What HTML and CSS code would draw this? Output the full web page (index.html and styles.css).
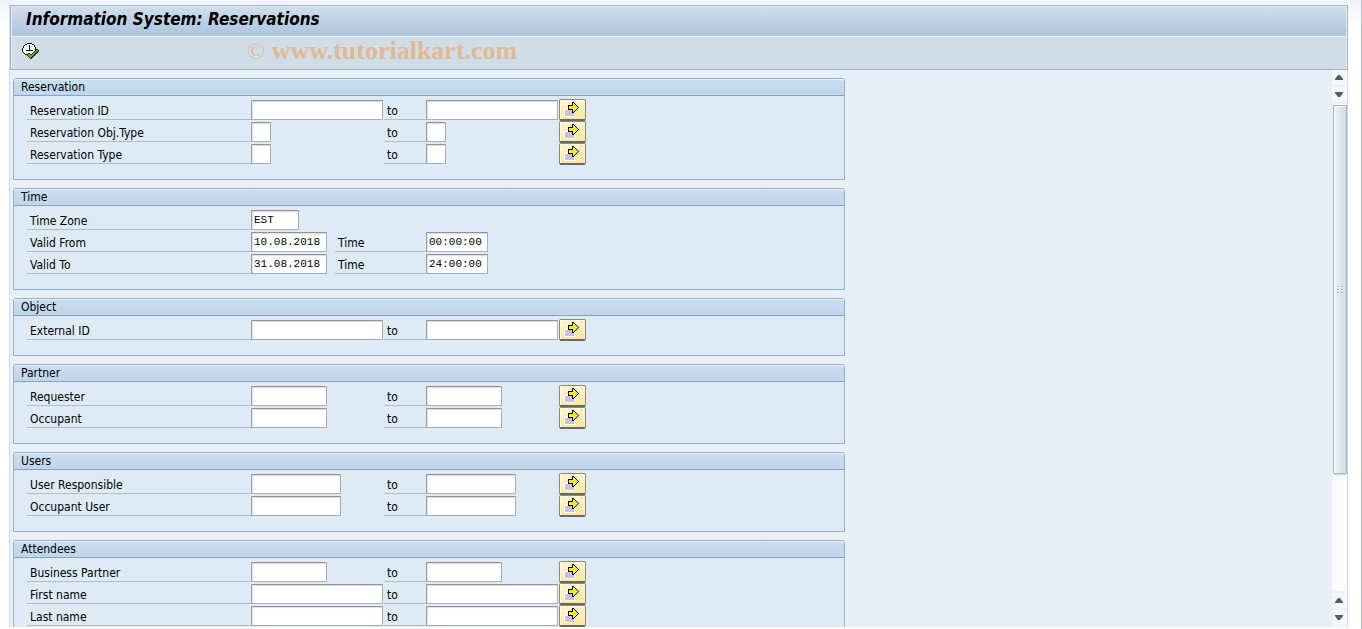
FILE: index.html
```html
<!DOCTYPE html>
<html lang="en">

<head>
    <meta charset="UTF-8">
    <title>Information System: Reservations</title>
    <meta name="viewport" content="width=device-width, initial-scale=1.0">
    <link rel="stylesheet" href="styles.css">
</head>

<body>
    <!-- Shared icons -->
    <svg class="icon-defs" width="0" height="0" aria-hidden="true">
        <symbol id="icon-multi" viewBox="0 0 16 16" shape-rendering="crispEdges">
            <path d="M0 7h11v8H0z" fill="#fff" />
            <path d="M1 8h9v6H1z" fill="#d2bfdc" />
            <path d="M4 3h4V0h2v1h1v1h1v1h1v1h1v1h1v1h-1v1h-1v1h-1v1h-1v1h-1v1H8V8H4z" fill="#000" />
            <path d="M5 4h4V1h1v1h1v1h1v1h1v1h1v1h-1v1h-1v1h-1v1h-1v1H9V7H5z" fill="#ffee00" />
        </symbol>
        <symbol id="icon-up" viewBox="0 0 8 5">
            <path d="M3 0h2l3 4v1H0V4z" fill="#4d5f6c" />
        </symbol>
        <symbol id="icon-down" viewBox="0 0 8 5">
            <path d="M0 0h8v1L5 5H3L0 1z" fill="#4d5f6c" />
        </symbol>
    </svg>

    <div class="window">
        <header class="title-bar">
            <h1>Information System: Reservations</h1>
        </header>

        <!-- Application toolbar -->
        <div class="toolbar">
            <button class="execute-btn" type="button" aria-label="Execute">
                <svg width="17" height="16" viewBox="0 0 17 16" shape-rendering="crispEdges">
                    <path d="M5 0h5v1h2v1h1v2h1v6h-1v1h-1v1h-2v1H5v-1H3v-1H2v-1H1V9H0V5h1V3h1V2h1V1h2z" fill="#000" />
                    <path d="M5 1h5v1h2v2h1v6h-1v1h-2v1H5v-1H3v-1H2V9H1V5h1V3h1V2h2z" fill="#fff" />
                    <path d="M7 2h1v5h3v1H4V7h3z" fill="#000" />
                    <path d="M14 6h2v1h1v2h-1v1h-1v1h-1v1h-1v1h-1v1h-1v1h-1v1H8v-1H7v-1H6v-1H5v-2h1v-1h2v1h2v-1h1V9h1V8h1V7h1z" fill="#1c3a10" />
                    <path d="M14 7h2v1h-1v1h-1v1h-1v1h-1v1h-1v1h-1v1H9v1H8v-1H7v-1H6v-2h2v1h2v-1h1v-1h1V9h1V8h1z" fill="#56b32c" />
                </svg>
            </button>
            <span class="watermark"><span class="copyright">©</span> www.tutorialkart.com</span>
        </div>

        <div class="workspace">
            <form class="selection">
                <fieldset class="group">
                    <legend>Reservation</legend>
                    <div class="row">
                        <label for="res-id">Reservation ID</label>
                        <input class="w-long" id="res-id" type="text">
                        <label for="res-id-to">to</label>
                        <input class="w-long" id="res-id-to" type="text">
                        <button class="multi-btn" type="button" aria-label="Multiple selection"><svg><use href="#icon-multi" /></svg></button>
                    </div>
                    <div class="row">
                        <label for="res-obj">Reservation Obj.Type</label>
                        <input class="w-tiny" id="res-obj" type="text">
                        <label for="res-obj-to">to</label>
                        <input class="w-tiny" id="res-obj-to" type="text">
                        <button class="multi-btn" type="button" aria-label="Multiple selection"><svg><use href="#icon-multi" /></svg></button>
                    </div>
                    <div class="row">
                        <label for="res-type">Reservation Type</label>
                        <input class="w-tiny" id="res-type" type="text">
                        <label for="res-type-to">to</label>
                        <input class="w-tiny" id="res-type-to" type="text">
                        <button class="multi-btn" type="button" aria-label="Multiple selection"><svg><use href="#icon-multi" /></svg></button>
                    </div>
                </fieldset>

                <fieldset class="group">
                    <legend>Time</legend>
                    <div class="row time-row">
                        <label for="zone">Time Zone</label>
                        <input class="w-zone" id="zone" type="text" value="EST">
                    </div>
                    <div class="row time-row">
                        <label for="valid-from">Valid From</label>
                        <input class="w-date" id="valid-from" type="text" value="10.08.2018">
                        <label for="from-time">Time</label>
                        <input class="w-time" id="from-time" type="text" value="00:00:00">
                    </div>
                    <div class="row time-row">
                        <label for="valid-to">Valid To</label>
                        <input class="w-date" id="valid-to" type="text" value="31.08.2018">
                        <label for="to-time">Time</label>
                        <input class="w-time" id="to-time" type="text" value="24:00:00">
                    </div>
                </fieldset>

                <fieldset class="group">
                    <legend>Object</legend>
                    <div class="row">
                        <label for="ext-id">External ID</label>
                        <input class="w-long" id="ext-id" type="text">
                        <label for="ext-id-to">to</label>
                        <input class="w-long" id="ext-id-to" type="text">
                        <button class="multi-btn" type="button" aria-label="Multiple selection"><svg><use href="#icon-multi" /></svg></button>
                    </div>
                </fieldset>

                <fieldset class="group">
                    <legend>Partner</legend>
                    <div class="row">
                        <label for="requester">Requester</label>
                        <input class="w-date" id="requester" type="text">
                        <label for="requester-to">to</label>
                        <input class="w-date" id="requester-to" type="text">
                        <button class="multi-btn" type="button" aria-label="Multiple selection"><svg><use href="#icon-multi" /></svg></button>
                    </div>
                    <div class="row">
                        <label for="occupant">Occupant</label>
                        <input class="w-date" id="occupant" type="text">
                        <label for="occupant-to">to</label>
                        <input class="w-date" id="occupant-to" type="text">
                        <button class="multi-btn" type="button" aria-label="Multiple selection"><svg><use href="#icon-multi" /></svg></button>
                    </div>
                </fieldset>

                <fieldset class="group">
                    <legend>Users</legend>
                    <div class="row">
                        <label for="user-resp">User Responsible</label>
                        <input class="w-user" id="user-resp" type="text">
                        <label for="user-resp-to">to</label>
                        <input class="w-user" id="user-resp-to" type="text">
                        <button class="multi-btn" type="button" aria-label="Multiple selection"><svg><use href="#icon-multi" /></svg></button>
                    </div>
                    <div class="row">
                        <label for="occ-user">Occupant User</label>
                        <input class="w-user" id="occ-user" type="text">
                        <label for="occ-user-to">to</label>
                        <input class="w-user" id="occ-user-to" type="text">
                        <button class="multi-btn" type="button" aria-label="Multiple selection"><svg><use href="#icon-multi" /></svg></button>
                    </div>
                </fieldset>

                <fieldset class="group">
                    <legend>Attendees</legend>
                    <div class="row">
                        <label for="partner">Business Partner</label>
                        <input class="w-date" id="partner" type="text">
                        <label for="partner-to">to</label>
                        <input class="w-date" id="partner-to" type="text">
                        <button class="multi-btn" type="button" aria-label="Multiple selection"><svg><use href="#icon-multi" /></svg></button>
                    </div>
                    <div class="row">
                        <label for="first-name">First name</label>
                        <input class="w-long" id="first-name" type="text">
                        <label for="first-name-to">to</label>
                        <input class="w-long" id="first-name-to" type="text">
                        <button class="multi-btn" type="button" aria-label="Multiple selection"><svg><use href="#icon-multi" /></svg></button>
                    </div>
                    <div class="row">
                        <label for="last-name">Last name</label>
                        <input class="w-long" id="last-name" type="text">
                        <label for="last-name-to">to</label>
                        <input class="w-long" id="last-name-to" type="text">
                        <button class="multi-btn" type="button" aria-label="Multiple selection"><svg><use href="#icon-multi" /></svg></button>
                    </div>
                </fieldset>
            </form>

            <!-- Vertical scroll bar -->
            <div class="scrollbar">
                <button class="scroll-btn" type="button" aria-label="Scroll up"><svg><use href="#icon-up" /></svg></button>
                <button class="scroll-btn" type="button" aria-label="Scroll down"><svg><use href="#icon-down" /></svg></button>
                <div class="track">
                    <div class="thumb">
                        <svg width="6" height="8" viewBox="0 0 6 8" shape-rendering="crispEdges">
                            <path d="M1 1h2v1H1zM5 1h1v1H5zM1 4h2v1H1zM5 4h1v1H5zM1 7h2v1H1zM5 7h1v1H5z" fill="#fff" />
                            <path d="M0 0h2v1H0zM4 0h2v1H4zM0 3h2v1H0zM4 3h2v1H4zM0 6h2v1H0zM4 6h2v1H4z" fill="#9db2c4" />
                        </svg>
                    </div>
                </div>
                <button class="scroll-btn" type="button" aria-label="Scroll up"><svg><use href="#icon-up" /></svg></button>
                <button class="scroll-btn" type="button" aria-label="Scroll down"><svg><use href="#icon-down" /></svg></button>
            </div>
        </div>
    </div>
</body>

</html>
```
FILE: styles.css
```css
* {
    box-sizing: border-box;
}

body {
    display: flex;
    height: 100vh;
    margin: 0;
    padding: 5px 13px 2px 10px;
    border-right: 1px solid #b9c0cc;
    background: linear-gradient(#f0f3f9, #fff 28px);
    font-family: "DejaVu Sans Condensed", Tahoma, sans-serif;
    font-size: 12px;
    color: #000;
    overflow: hidden;
}

.icon-defs {
    position: absolute;
}

.window {
    flex: 1;
    display: flex;
    flex-direction: column;
    min-width: 0;
    background-color: #e8eff7;
    box-shadow: -1px 0 0 #d5dbe8;
}

.title-bar {
    height: 31px;
    padding: 0 15px;
    border: 1px solid #a3b5c8;
    border-bottom: 0;
    background: linear-gradient(#cfdfeb, #adc4dd);
    box-shadow: inset 1px 1px 0 #e2ebf3, inset -1px 0 0 #e2ebf3;
}

.title-bar h1 {
    margin: 0;
    font-size: 17px;
    line-height: 27px;
    font-style: italic;
    font-weight: bold;
}

.toolbar {
    display: flex;
    align-items: center;
    height: 34px;
    padding: 0 10px 4px;
    border: 1px solid #a3b5c8;
    border-top-color: #e6eef6;
    background-color: #cfdde8;
    box-shadow: inset 1px 0 0 #e2ebf3, inset -1px 0 0 #e2ebf3;
}

.execute-btn {
    width: 20px;
    height: 20px;
    padding: 0;
    border: 0;
    background: none;
}

.execute-btn svg {
    display: block;
    margin: 2px 1px;
}

.watermark {
    margin-left: 206px;
    font-family: "Liberation Serif", "Times New Roman", serif;
    font-size: 26px;
    line-height: 28px;
    font-weight: bold;
    color: #e3b98d;
    white-space: nowrap;
}

.copyright {
    font-size: 24px;
    font-weight: normal;
}

.workspace {
    flex: 1;
    display: flex;
    justify-content: space-between;
    min-height: 0;
    border-right: 1px solid #d0d8e6;
    overflow: hidden;
}

.selection {
    flex: 1;
    max-width: 835px;
    padding: 8px 0 0 3px;
}

/* Selection groups */
.group {
    margin: 0 0 8px;
    padding: 0 0 14px;
    border: 1px solid #8fb1d2;
    border-radius: 3px 3px 0 0;
    background-color: #deebf4;
}

.group legend {
    float: left;
    width: 100%;
    height: 17px;
    margin-bottom: 3px;
    padding: 0 7px;
    border-bottom: 1px solid #86a2c4;
    border-radius: 2px 2px 0 0;
    background: linear-gradient(#cbdeef, #bfd5eb);
    box-shadow: inset 0 1px 0 #e9f3fb;
    line-height: 16px;
}

.row {
    clear: both;
    display: grid;
    grid-template-columns: 224px 133px 42px 133px 27px;
    align-items: center;
    height: 22px;
    padding-left: 13px;
}

.time-row {
    grid-template-columns: 224px 84px 91px 133px;
}

.row label {
    height: 20px;
    padding-left: 3px;
    border-bottom: 1px solid #b3bcc4;
    line-height: 22px;
    white-space: nowrap;
}

.row input {
    height: 20px;
    padding: 0 2px;
    border: 1px solid #aaadb2;
    border-top-color: #8f9298;
    border-left-color: #9c9fa5;
    border-radius: 1px;
    background-color: #fff;
    box-shadow: inset 1px 1px 1px #dcdce2;
    font-family: "Liberation Mono", "Courier New", monospace;
    font-size: 11px;
    color: #000;
}

.row .w-tiny {
    width: 20px;
}

.row .w-zone {
    width: 48px;
}

.row .w-time {
    width: 62px;
}

.row .w-date {
    width: 76px;
}

.row .w-user {
    width: 90px;
}

.row .w-long {
    width: 132px;
}

.multi-btn {
    width: 27px;
    height: 22px;
    padding: 2px 0 1px 4px;
    border: 1px solid #8d8a7c;
    border-bottom: 2px solid #66675f;
    border-radius: 2px;
    background: linear-gradient(#fff5cf, #fde997);
    box-shadow: inset 1px 1px 0 #fffbe8;
}

.multi-btn svg {
    display: block;
    width: 16px;
    height: 16px;
}

/* Scroll bar */
.scrollbar {
    display: flex;
    flex-direction: column;
    gap: 2px;
    width: 15px;
    padding: 0 0 2px;
    background-color: #f0f1f6;
}

.scroll-btn {
    display: flex;
    align-items: center;
    justify-content: center;
    height: 15px;
    padding: 0 1px 0 0;
    border: 0;
    background-color: #f5f8fb;
}

.scroll-btn svg {
    width: 8px;
    height: 5px;
}

.track {
    flex: 1;
    padding: 1px 0 0 1px;
    background-color: #fafcfc;
}

.thumb {
    display: flex;
    align-items: center;
    justify-content: center;
    height: 76%;
    border: 1px solid #a0b2c0;
    border-radius: 1px;
    background: linear-gradient(to right, #edf4f9, #cbdce9);
    box-shadow: inset 1px 1px 0 #fff, 0 1px 2px #d0d5da;
}
```
